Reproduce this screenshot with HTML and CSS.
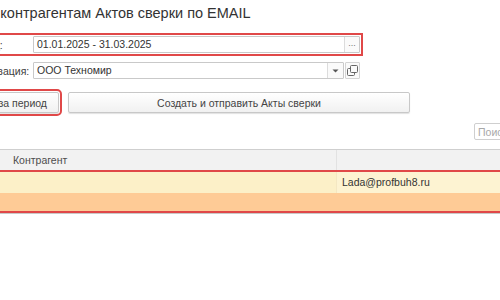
FILE: index.html
```html
<!DOCTYPE HTML>
<html>
<head>
<title>Отправка Актов сверки</title>
<link rel="stylesheet" href="styles.css">
</head>
<body>
<div class="page">
  <h1 class="title">Отправка контрагентам Актов сверки по EMAIL</h1>

  <div class="form">
    <div class="field marked">
      <label class="field-label">Период:</label>
      <div class="input-box">
        <span class="input-text">01.01.2025 - 31.03.2025</span>
        <span class="input-btn dots">...</span>
      </div>
    </div>

    <div class="field">
      <label class="field-label">Организация:</label>
      <div class="input-box short">
        <span class="input-text">ООО Техномир</span>
        <span class="input-btn">
          <svg width="7" height="4" viewBox="0 0 7 4"><path d="M0.5 0.5h6l-3 3z" fill="#555"/></svg>
        </span>
      </div>
      <span class="side-btn">
        <svg width="11" height="11" viewBox="0 0 11 11" fill="none" stroke="#666" stroke-width="1">
          <rect x="3.5" y="0.5" width="7" height="7" rx="1"/>
          <path d="M3.5 3.5h-2a1 1 0 0 0 -1 1v5a1 1 0 0 0 1 1h5a1 1 0 0 0 1 -1v-2"/>
        </svg>
      </span>
    </div>

    <div class="buttons">
      <button class="btn fill-btn marked">Заполнить за период</button>
      <button class="btn send-btn">Создать и отправить Акты сверки</button>
    </div>
  </div>

  <div class="toolbar">
    <input class="search" type="text" placeholder="Поиск (Ctrl+F)" />
  </div>

  <div class="grid">
    <div class="grid-head">
      <div class="cell col-name">Контрагент</div>
      <div class="cell col-mail"></div>
    </div>
    <div class="grid-rows marked">
      <div class="grid-row row-current">
        <div class="cell col-name"></div>
        <div class="cell col-mail">Lada@profbuh8.ru</div>
      </div>
      <div class="grid-row row-selected">
        <div class="cell col-name"></div>
        <div class="cell col-mail"></div>
      </div>
    </div>
  </div>
</div>
</body>
</html>
```

FILE: styles.css
```css
body {
  margin: 0;
  overflow: hidden;
  background: #fff;
  color: #404040;
  font-family: "Liberation Sans", Arial, sans-serif;
  font-size: 10.5px;
}

.page {
  width: 620px;
  margin-left: -60px;
}

.title {
  margin: 0;
  padding: 3px 0 0 0;
  margin-left: -8px;
  font-size: 14.5px;
  font-weight: normal;
  line-height: 20px;
  color: #333;
}

.marked {
  outline: 2px solid #e04848;
}

.form {
  margin-top: 13px;
  margin-left: 20px;
}

.field {
  display: flex;
  align-items: center;
  width: 400px;
  height: 17px;
  margin-bottom: 9px;
}

.field.marked {
  outline-offset: 1px;
}

.field-label {
  width: 70px;
  margin-left: 3px;
  flex: none;
}

.input-box {
  display: flex;
  width: 327px;
  height: 17px;
  box-sizing: border-box;
  border: 1px solid #c9c9c9;
  border-radius: 1px;
  background: #fff;
}

.input-box.short {
  width: 313px;
}

.input-text {
  flex: 1;
  padding-left: 3px;
  line-height: 15px;
  color: #333;
}

.input-btn {
  width: 15px;
  display: flex;
  align-items: center;
  justify-content: center;
  border-left: 1px solid #dcdcdc;
  background: #fafafa;
  color: #777;
  font-size: 9px;
}

.input-btn.dots {
  align-items: flex-end;
  padding-bottom: 4px;
  box-sizing: border-box;
}

.side-btn {
  display: flex;
  align-items: center;
  justify-content: center;
  width: 15px;
  height: 17px;
  margin-left: 1px;
  box-sizing: border-box;
  border: 1px solid #d4d4d4;
  border-radius: 1px;
  background: #fafafa;
}

.buttons {
  display: flex;
  gap: 9px;
  margin-top: 13px;
  margin-left: -28px;
}

.btn {
  height: 21px;
  padding: 0 11px;
  border: 1px solid #c8c8c8;
  border-radius: 2px;
  background: linear-gradient(#fff, #f1f1f1);
  box-shadow: 0 1px 1px rgba(0, 0, 0, 0.12);
  font-family: inherit;
  font-size: 10.5px;
  color: #444;
}

.fill-btn {
  outline-offset: 1px;
}

.send-btn {
  width: 342px;
}

.toolbar {
  display: flex;
  justify-content: flex-end;
  margin-top: 10px;
}

.search {
  width: 86px;
  height: 17px;
  box-sizing: border-box;
  padding: 0 3px;
  border: 1px solid #cfcfcf;
  border-radius: 2px;
  font-family: inherit;
  font-size: 10.5px;
}

.search::placeholder {
  color: #a8a8a8;
}

.grid {
  margin-top: 9px;
  border-top: 1px solid #cfcfcf;
  border-bottom: 1px solid #c9c9c9;
}

.grid-head {
  display: flex;
  height: 20px;
  background: #f2f2f2;
  color: #4d4d4d;
}

.grid-rows {
  margin: 2px 0;
}

.grid-row {
  display: flex;
}

.cell {
  box-sizing: border-box;
  line-height: 20px;
}

.col-name {
  width: 397px;
  padding-left: 73px;
  border-right: 1px solid #e2e2e2;
}

.col-mail {
  flex: 1;
  padding-left: 5px;
  color: #333;
}

.row-current {
  height: 21px;
  background: #fcf0c8;
}

.row-current .col-name {
  border-right-color: #f4e7c2;
}

.row-current .col-mail {
  background: #fdf3d2;
}

.row-selected {
  height: 18px;
  background: #fecb96;
}

.row-selected .col-name {
  border-right: none;
}
```
